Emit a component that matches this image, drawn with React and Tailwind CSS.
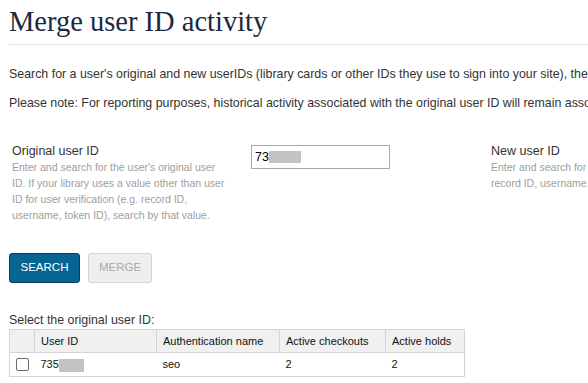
import React from 'react';

const Redacted = ({ className }) => (
  <span className={`inline-block bg-[#c3c3c3] align-middle ${className}`} />
);

const App = () => {
  return (
    <div className="w-[588px] h-[383px] overflow-hidden bg-white text-[#333] font-['Liberation_Sans',Arial,sans-serif]">
      <div className="w-[1100px]">
        <div className="ml-[9px] h-[45px] border-b border-[#e3e3e3]">
          <h1 className="pt-[5px] leading-[34px] text-[28.5px] text-[#1b2a40] font-['Liberation_Serif','Times_New_Roman',serif]">
            Merge user ID activity
          </h1>
        </div>

        <div className="pl-[9px] text-[12.4px] leading-[18px] whitespace-nowrap">
          <p className="mt-[20px]">
            Search for a user's original and new userIDs (library cards or other IDs they use to sign into your site), then select the accounts to merge.
          </p>
          <p className="mt-[11px]">
            Please note: For reporting purposes, historical activity associated with the original user ID will remain associated with the original user ID.
          </p>
        </div>

        <div className="mt-[31px] flex">
          <div className="w-[491px] flex pl-[12px]">
            <div className="w-[239px]">
              <div className="text-[12.5px] leading-[16px]">Original user ID</div>
              <div className="text-[10.5px] leading-[16px] text-[#9e9e9e] whitespace-nowrap">
                Enter and search for the user's original user
                <br />
                ID. If your library uses a value other than user
                <br />
                ID for user verification (e.g. record ID,
                <br />
                username, token ID), search by that value.
              </div>
            </div>
            <div className="mt-[2px] w-[139px] h-[24px] border border-[#a9a9a9] flex items-center px-[3px] text-[12.5px] text-black">
              73<Redacted className="w-[32px] h-[12px]" />
            </div>
          </div>
          <div>
            <div className="text-[12.5px] leading-[16px]">New user ID</div>
            <div className="text-[10.5px] leading-[16px] text-[#9e9e9e] whitespace-nowrap">
              Enter and search for the user's new user ID. If your library uses a value other than user ID for user verification (e.g.
              <br />
              record ID, username, token ID), search by that value.
            </div>
          </div>
        </div>

        <div className="mt-[30px] ml-[9px] flex gap-[8px]">
          <button className="w-[71px] h-[30px] rounded-[3px] bg-[#076593] border border-[#0b3f5e] text-white text-[11.5px]">
            SEARCH
          </button>
          <button className="w-[64px] h-[30px] rounded-[3px] bg-[#eeeeee] border border-[#d5d5d5] text-[#a9a9a9] text-[11.5px]">
            MERGE
          </button>
        </div>

        <div className="mt-[29px] ml-[9px] text-[12.4px] leading-[16px]">Select the original user ID:</div>

        <table className="mt-[1px] ml-[9px] border-collapse text-[11px] text-[#111] font-['Liberation_Sans',Tahoma,sans-serif]">
          <thead>
            <tr className="h-[23px] bg-[#f0f0f0] text-left">
              <th className="w-[25px] border border-[#d4d4d4] font-normal"></th>
              <th className="w-[122px] border border-[#d4d4d4] font-normal px-[6px]">User ID</th>
              <th className="w-[123px] border border-[#d4d4d4] font-normal px-[6px]">Authentication name</th>
              <th className="w-[106px] border border-[#d4d4d4] font-normal px-[6px]">Active checkouts</th>
              <th className="w-[79px] border border-[#d4d4d4] font-normal px-[6px]">Active holds</th>
            </tr>
          </thead>
          <tbody>
            <tr className="h-[24px]">
              <td className="border border-[#d4d4d4] border-r-0">
                <div className="ml-[6px] w-[13px] h-[13px] rounded-[2px] border border-[#6b6b6b] bg-white" />
              </td>
              <td className="border-y border-[#d4d4d4] px-[6px]">
                735<Redacted className="w-[25px] h-[13px]" />
              </td>
              <td className="border-y border-[#d4d4d4] px-[6px]">seo</td>
              <td className="border-y border-[#d4d4d4] px-[6px]">2</td>
              <td className="border border-[#d4d4d4] border-l-0 px-[6px]">2</td>
            </tr>
          </tbody>
        </table>
      </div>
    </div>
  );
};

export default App;
